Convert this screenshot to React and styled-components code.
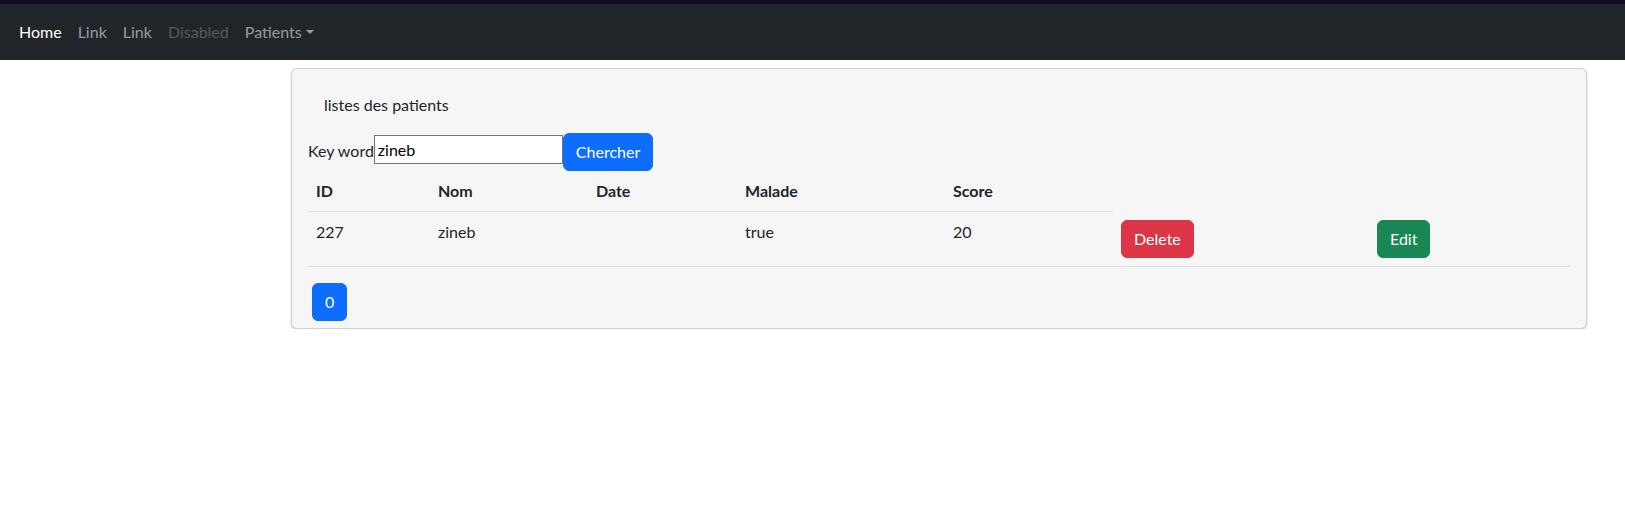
import React from "react";
import styled, { createGlobalStyle, css } from "styled-components";

const GlobalStyle = createGlobalStyle`
  * {
    box-sizing: border-box;
  }
  body {
    margin: 0;
    background-color: #fff;
    color: #212529;
    font-family: Lato, "Open Sans", sans-serif;
    font-size: 16px;
    line-height: 1.5;
  }
`;

const patients = [{ id: 227, nom: "zineb", date: "", malade: "true", score: 20 }];

const columns = [122, 158, 149, 208, 168, 256, 201];

function App() {
  return (
    <>
      <GlobalStyle />
      <TopStrip />
      <Navbar>
        <NavLink $active>Home</NavLink>
        <NavLink>Link</NavLink>
        <NavLink>Link</NavLink>
        <NavLink $disabled>Disabled</NavLink>
        <NavLink $dropdown>Patients</NavLink>
      </Navbar>
      <Card>
        <Title>listes des patients</Title>
        <SearchForm>
          <Label>Key word</Label>
          <SearchInput type="text" value="zineb" readOnly />
          <Button $variant="primary">Chercher</Button>
        </SearchForm>
        <Table>
          <colgroup>
            {columns.map((w, idx) => (
              <col key={idx} style={{ width: w }} />
            ))}
          </colgroup>
          <thead>
            <tr>
              <Th>ID</Th>
              <Th>Nom</Th>
              <Th>Date</Th>
              <Th>Malade</Th>
              <Th>Score</Th>
            </tr>
          </thead>
          <tbody>
            {patients.map((p) => (
              <tr key={p.id}>
                <Td>{p.id}</Td>
                <Td>{p.nom}</Td>
                <Td>{p.date}</Td>
                <Td>{p.malade}</Td>
                <Td>{p.score}</Td>
                <Td>
                  <Button $variant="danger">Delete</Button>
                </Td>
                <Td>
                  <Button $variant="success">Edit</Button>
                </Td>
              </tr>
            ))}
          </tbody>
        </Table>
        <Pages>
          <Button $variant="primary">0</Button>
        </Pages>
      </Card>
    </>
  );
}

const TopStrip = styled.div`
  height: 4px;
  background-color: #100d21;
`;

const Navbar = styled.nav`
  display: flex;
  align-items: center;
  height: 56px;
  padding: 8px 11px;
  background-color: #212529;
`;

const NavLink = styled.a`
  padding: 8px;
  color: rgba(255, 255, 255, 0.55);
  cursor: pointer;
  ${(p) =>
    p.$active &&
    css`
      color: #fff;
    `}
  ${(p) =>
    p.$disabled &&
    css`
      color: rgba(255, 255, 255, 0.25);
    `}
  ${(p) =>
    p.$dropdown &&
    css`
      &::after {
        content: "";
        display: inline-block;
        margin-left: 0.255em;
        vertical-align: 0.255em;
        border-top: 0.3em solid;
        border-right: 0.3em solid transparent;
        border-left: 0.3em solid transparent;
      }
    `}
`;

const Card = styled.div`
  margin: 8px 38px 0 291px;
  padding: 16px 16px 7px;
  background-color: #f6f6f6;
  border: 1px solid rgba(0, 0, 0, 0.15);
  border-radius: 6px;
  box-shadow: 0 1px 2px rgba(0, 0, 0, 0.2);
`;

const Title = styled.div`
  padding: 8px 16px;
`;

const SearchForm = styled.form`
  display: flex;
  align-items: flex-start;
  margin-top: 8px;
`;

const Label = styled.label`
  margin-top: 6px;
`;

const SearchInput = styled.input`
  width: 189px;
  height: 29px;
  margin-top: 2px;
  padding: 1px 3px;
  border: 1px solid #767676;
  background-color: #fff;
  color: #000;
  font: inherit;
  outline: none;
`;

const colors = {
  primary: "#0d6efd",
  danger: "#dc3545",
  success: "#198754",
};

const Button = styled.button`
  display: inline-block;
  padding: 6px 12px;
  border: 1px solid ${(p) => colors[p.$variant]};
  border-radius: 6px;
  background-color: ${(p) => colors[p.$variant]};
  color: #fff;
  font: inherit;
  line-height: 24px;
  cursor: pointer;
`;

const Table = styled.table`
  width: 100%;
  margin-bottom: 16px;
  table-layout: fixed;
  border-collapse: collapse;
`;

const Th = styled.th`
  padding: 8px;
  text-align: left;
  vertical-align: top;
  font-weight: 700;
  border-bottom: 1px solid #dee2e6;
`;

const Td = styled.td`
  padding: 8px;
  vertical-align: top;
  border-bottom: 1px solid #dee2e6;
`;

const Pages = styled.div`
  display: flex;
  padding-left: 4px;
`;

export default App;
